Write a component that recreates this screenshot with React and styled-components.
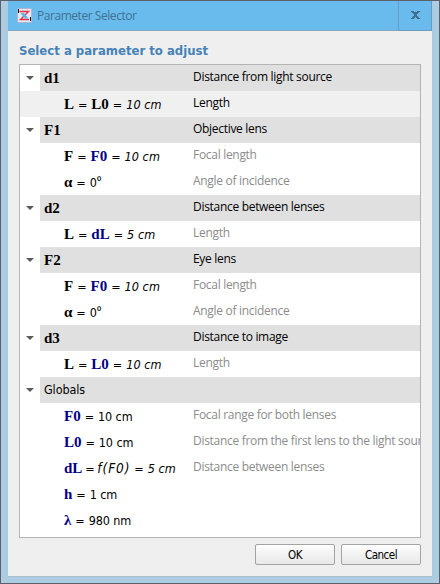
import React from 'react';
import styled, { createGlobalStyle, css } from 'styled-components';

const Global = createGlobalStyle`
  * { box-sizing: border-box; }
  body { margin: 0; overflow: hidden; }
`;

const tahoma = css`
  font-family: 'DejaVu Sans Condensed', 'DejaVu Sans', sans-serif;
  font-stretch: condensed;
`;
const segoe = css`
  font-family: 'Open Sans', 'Noto Sans', sans-serif;
`;

const Window = styled.div`
  width: 440px;
  height: 584px;
  display: flex;
  flex-direction: column;
  background: #abcce1;
  border: 1px solid #5d616d;
  padding: 0 7px 7px;
  white-space: nowrap;
`;

const TitleBar = styled.header`
  flex: 0 0 30px;
  height: 30px;
  min-height: 0;
  display: flex;
  background: #69bbee;
  border-bottom: 1px solid #86a6bb;
`;

const AppIcon = styled.svg`
  width: 15px;
  height: 15px;
  margin: 7px 5px 0 9px;
`;

const Caption = styled.h1`
  ${segoe}
  flex: 1;
  margin: 0;
  font-size: 12px;
  font-weight: 400;
  line-height: 29px;
  letter-spacing: -0.45px;
  color: #41718f;
`;

const CloseButton = styled.button`
  width: 34px;
  height: 30px;
  margin-bottom: -1px;
  padding: 0 0 1px;
  display: flex;
  align-items: center;
  justify-content: center;
  background: #69bbee;
  border: solid #6c9cba;
  border-width: 0 1px 1px;
`;

const Body = styled.main`
  flex: 1;
  display: flex;
  flex-direction: column;
  background: #efefef;
  border-bottom: 1px solid #a9bdca;
  padding: 0 11px 11px;
`;

const Heading = styled.h2`
  ${tahoma}
  flex: 0 0 33px;
  margin: 0;
  padding-top: 10px;
  font-size: 13px;
  font-weight: 700;
  line-height: 20px;
  color: #4682b8;
`;

const Tree = styled.section`
  flex: 0 0 474px;
  background: #fff;
  border: 1px solid #b4b4b4;
  overflow: hidden;
`;

const Row = styled.div`
  height: 26px;
  display: grid;
  grid-template-columns: 20px 153px 1fr;
  grid-template-rows: 26px;
  color: #000;
  background: ${(p) =>
    p.$group
      ? 'linear-gradient(to right, #fff 20px, #e0e0e0 20px)'
      : p.$selected
        ? '#f0f0f0'
        : '#fff'};
`;

const Toggle = styled.span`
  display: flex;
  align-items: center;
  justify-content: center;
`;

const Expression = styled.span`
  ${tahoma}
  padding-left: ${(p) => (p.$group ? 4 : 24)}px;
  font-size: 12.5px;
  line-height: ${(p) => (p.$plain ? 26 : 28)}px;
  letter-spacing: -0.1px;
`;

const Symbol = styled.b`
  font-family: 'Liberation Serif', serif;
  font-size: 15px;
  line-height: 1;
  letter-spacing: 0;
  color: ${(p) => (p.$variable ? '#000085' : '#000')};
`;

const Equals = styled.span`
  display: inline-block;
  width: ${(p) => (p.$tight ? 15 : 17.3)}px;
  text-align: center;
`;

const Derived = styled.i`
  letter-spacing: 0.1px;
`;

const Formula = styled.i`
  font-size: 13.5px;
  line-height: 1;
  letter-spacing: 0.9px;
`;

const Degree = styled.span`
  ${segoe}
  font-size: 15px;
  line-height: 1;
`;

const Description = styled.span`
  ${segoe}
  font-size: 12px;
  line-height: 24px;
  letter-spacing: -0.3px;
  overflow: hidden;
  color: ${(p) => (p.$muted ? '#8c8c8c' : '#000')};
`;

const Actions = styled.footer`
  display: flex;
  justify-content: flex-end;
  gap: 6px;
  padding-top: 6px;
`;

const Button = styled.button`
  ${tahoma}
  width: 80px;
  height: 21px;
  padding: 0;
  font-size: 11.5px;
  line-height: 18px;
  letter-spacing: -0.5px;
  color: #000;
  background: linear-gradient(#fdfdfd, #e8e8e8);
  border: 1px solid #a3a3a3;
  border-radius: 2px;
`;

const S = ({ children }) => <Symbol>{children}</Symbol>;
const V = ({ children }) => <Symbol $variable>{children}</Symbol>;
const eq = <Equals>=</Equals>;
const ten = <Derived>10 cm</Derived>;
const five = <Derived>5 cm</Derived>;
const angle = <><S>α</S>{eq}0<Degree>º</Degree></>;

const rows = [
  { group: true, expr: <S>d1</S>, text: 'Distance from light source' },
  { selected: true, expr: <><S>L</S>{eq}<S>L0</S>{eq}{ten}</>, text: 'Length' },
  { group: true, expr: <S>F1</S>, text: 'Objective lens' },
  { expr: <><S>F</S>{eq}<V>F0</V>{eq}{ten}</>, text: 'Focal length' },
  { expr: angle, text: 'Angle of incidence' },
  { group: true, expr: <S>d2</S>, text: 'Distance between lenses' },
  { expr: <><S>L</S>{eq}<V>dL</V>{eq}{five}</>, text: 'Length' },
  { group: true, expr: <S>F2</S>, text: 'Eye lens' },
  { expr: <><S>F</S>{eq}<V>F0</V>{eq}{ten}</>, text: 'Focal length' },
  { expr: angle, text: 'Angle of incidence' },
  { group: true, expr: <S>d3</S>, text: 'Distance to image' },
  { expr: <><S>L</S>{eq}<V>L0</V>{eq}{ten}</>, text: 'Length' },
  { group: true, plain: true, expr: 'Globals', text: '' },
  { expr: <><V>F0</V>{eq}10 cm</>, text: 'Focal range for both lenses' },
  { expr: <><V>L0</V>{eq}10 cm</>, text: 'Distance from the first lens to the light source' },
  { expr: <><V>dL</V><Equals $tight>=</Equals><Formula>f(F0)</Formula>{eq}{five}</>, text: 'Distance between lenses' },
  { expr: <><V>h</V>{eq}1 cm</>, text: '' },
  { expr: <><V>λ</V>{eq}980 nm</>, text: '' },
];

export default function App() {
  return (
    <>
      <Global />
      <Window>
        <TitleBar>
          <AppIcon viewBox="0 0 15 15">
            <rect x="0.5" y="0.5" width="14" height="14" rx="1" fill="#e6e8f6" stroke="#aeb4d4" />
            <path d="M2.5 3.5H11.5L3.5 11.5H12" fill="none" stroke="#ee3038" strokeWidth="1.4" />
            <path d="M3.5 5H7L11.5 10.5H8Z" fill="#58b8ee" />
            <path d="M1.5 1V5M13.5 9V13" stroke="#111" />
          </AppIcon>
          <Caption>Parameter Selector</Caption>
          <CloseButton aria-label="Close">
            <svg width="9" height="8" viewBox="0 0 9 8">
              <path d="M0 0H3V1H6V0H9V1H8V2H7V3H6V5H7V6H8V7H9V8H6V7H5V6H4V7H3V8H0V7H1V6H2V5H3V3H2V2H1V1H0Z" fill="#41718f" />
            </svg>
          </CloseButton>
        </TitleBar>
        <Body>
          <Heading>Select a parameter to adjust</Heading>
          <Tree>
            {rows.map((r, i) => (
              <Row key={i} $group={r.group} $selected={r.selected}>
                <Toggle>
                  {r.group && (
                    <svg width="8" height="4" viewBox="0 0 8 4">
                      <path d="M0 0H8L4 4Z" fill="#5a5a5a" />
                    </svg>
                  )}
                </Toggle>
                <Expression $group={r.group} $plain={r.plain}>{r.expr}</Expression>
                <Description $muted={!r.group && !r.selected}>{r.text}</Description>
              </Row>
            ))}
          </Tree>
          <Actions>
            <Button>OK</Button>
            <Button>Cancel</Button>
          </Actions>
        </Body>
      </Window>
    </>
  );
}
